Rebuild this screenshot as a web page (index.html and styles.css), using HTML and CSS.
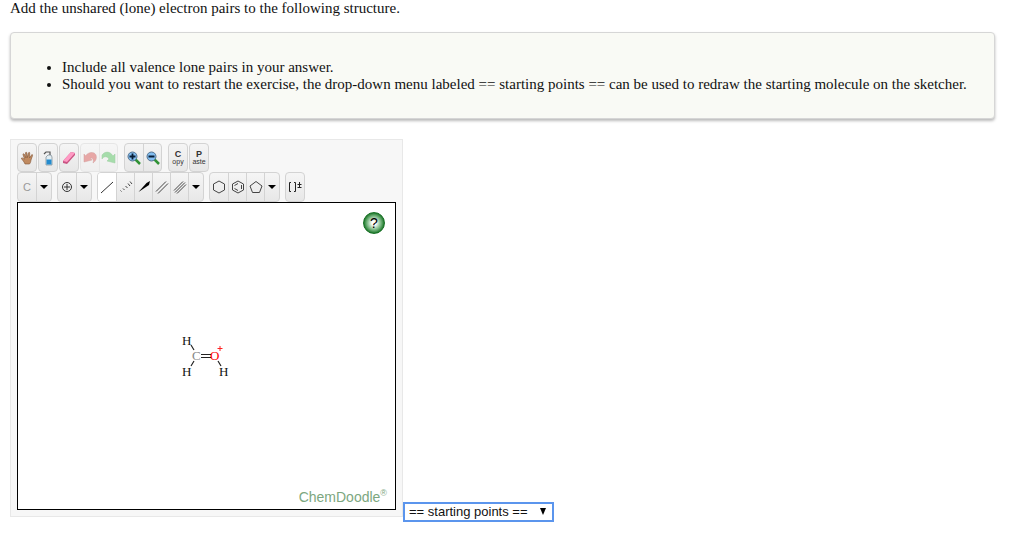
FILE: index.html
```html
<!DOCTYPE html>
<html lang="en">
<head>
<meta charset="utf-8">
<title>Lone pairs exercise</title>
<link rel="stylesheet" href="styles.css">
</head>
<body>
<main class="page">
  <p class="prompt">Add the unshared (lone) electron pairs to the following structure.</p>
  <section class="notes">
    <ul class="note-list">
      <li>Include all valence lone pairs in your answer.</li>
      <li>Should you want to restart the exercise, the drop-down menu labeled == starting points == can be used to redraw the starting molecule on the sketcher.</li>
    </ul>
  </section>
  <div class="work">
    <div class="sketcher">
      <div class="toolbar">
        <div class="group"><button class="tool" aria-label="Move"><svg width="16" height="16" viewBox="0 0 16 16"><path d="M6 14C5 11 2 9 2.500 8c1-.5 2 .7 3 1.200L4 4.500c0-1 1-1 1.500 0L7 8l-.5-5c0-1 1.200-1 1.400 0L8.500 7.500 9.500 3c.2-1 1.300-.8 1.200.2L10.500 8l2-3c.5-.8 1.400-.3 1 .7L12 10c-.2 2-.8 3-1.500 4z" fill="#c08a60" stroke="#805436" stroke-width=".6"/></svg></button></div>
        <div class="group"><button class="tool" aria-label="Clear"><svg width="16" height="16" viewBox="0 0 16 16"><path d="M4 4l2-2h4v3" fill="none" stroke="#555" stroke-width="1.200"/><path d="M6 7l2-2h3l1 2v8H6z" fill="#e2edf2" stroke="#788791" stroke-width=".7"/><path d="M6.500 9.500h5v5h-5z" fill="#238bce"/></svg></button></div>
        <div class="group"><button class="tool" aria-label="Erase"><svg width="16" height="16" viewBox="0 0 16 16"><path d="M2 11L10 2l4 1v2l-8 9-4-1z" fill="#c95483"/><path d="M2 11L10 2l4 1-8 9z" fill="#ff9ac4"/></svg></button></div>
        <div class="group group-faded">
          <button class="tool" aria-label="Undo"><svg width="16" height="16" viewBox="0 0 16 16"><path d="M2 4l1.500 2C6 2 12 1 14 5c1 3 0 6-3 8 1-3 0-5-3-5l2 2-8 2z" fill="#d44845" stroke="#a83432" stroke-width=".5"/></svg></button>
          <button class="tool" aria-label="Redo"><svg width="16" height="16" viewBox="0 0 16 16"><path d="M1 5C4 1 9 1 12 6l2-2v9l-8-2 2-2C6 6 3 6 1 9z" fill="#46bd51" stroke="#309d3a" stroke-width=".5"/></svg></button>
        </div>
        <div class="group group-zoom">
          <button class="tool" aria-label="Zoom in"><svg width="16" height="16" viewBox="0 0 16 16"><path d="M9 9l5 5" stroke="#309235" stroke-width="2.500"/><circle cx="6.500" cy="6.500" r="4.500" fill="#82bdf0" stroke="#54718d"/><path d="M3.500 6.500h6M6.500 3.500v6" stroke="#071d35" stroke-width="1.800"/></svg></button>
          <button class="tool" aria-label="Zoom out"><svg width="16" height="16" viewBox="0 0 16 16"><path d="M9 9l5 5" stroke="#309235" stroke-width="2.500"/><circle cx="6.500" cy="6.500" r="4.500" fill="#82bdf0" stroke="#54718d"/><path d="M3.500 6.500h6" stroke="#071d35" stroke-width="1.800"/></svg></button>
        </div>
        <div class="group group-copy"><button class="tool tool-text"><b>C</b><small>opy</small></button></div>
        <div class="group"><button class="tool tool-text"><b>P</b><small>aste</small></button></div>
      </div>
      <div class="toolbar toolbar-draw">
        <div class="group"><button class="tool tool-element">C</button><button class="tool tool-arrow" aria-label="More elements"><svg width="8" height="4" viewBox="0 0 8 4"><path d="M0 0h8L4 4z"/></svg></button></div>
        <div class="group"><button class="tool" aria-label="Increase charge"><svg width="16" height="16" viewBox="0 0 16 16"><g fill="none" stroke="#333"><circle cx="8" cy="8" r="4.500"/><path d="M5 8h6M8 5v6"/></g></svg></button><button class="tool tool-arrow" aria-label="More charges"><svg width="8" height="4" viewBox="0 0 8 4"><path d="M0 0h8L4 4z"/></svg></button></div>
        <div class="group">
          <button class="tool tool-selected" aria-label="Single bond"><svg width="16" height="16" viewBox="0 0 16 16"><path d="M2 14L14 3" stroke="#333"/></svg></button>
          <button class="tool" aria-label="Recessed bond"><svg width="16" height="16" viewBox="0 0 16 16"><path d="M2.500 11.500l1 1M5 9.500l1.500 1.500M7.500 7l2 2M10 4.500l2 2.500M12 2.500l2 2.500" stroke="#444"/></svg></button>
          <button class="tool" aria-label="Protruding bond"><svg width="16" height="16" viewBox="0 0 16 16"><path d="M2.500 13l8-9 3.500-2-1 4z"/></svg></button>
          <button class="tool" aria-label="Double bond"><svg width="16" height="16" viewBox="0 0 16 16"><path d="M2 12.500L12 2.500M4 14.500L14 4.500" stroke="#444"/></svg></button>
          <button class="tool tool-narrow" aria-label="Triple bond"><svg width="16" height="16" viewBox="0 0 16 16"><path d="M2 11.500l9-9M3 13.500L13 3.500M5 14.500l9-9" stroke="#444"/></svg></button>
          <button class="tool tool-arrow" aria-label="More bonds"><svg width="8" height="4" viewBox="0 0 8 4"><path d="M0 0h8L4 4z"/></svg></button>
        </div>
        <div class="group">
          <button class="tool" aria-label="Cyclohexane"><svg width="16" height="16" viewBox="0 0 16 16"><path d="M8 2l5.500 3v6L8 14l-5.500-3V5z" fill="none" stroke="#444"/></svg></button>
          <button class="tool" aria-label="Benzene"><svg width="16" height="16" viewBox="0 0 16 16"><path d="M8 2l5.500 3v6L8 14l-5.500-3V5zM8 4.500L4.500 6.500M4.500 9.500l3.500 2M11.500 6v4" fill="none" stroke="#444"/></svg></button>
          <button class="tool" aria-label="Cyclopentane"><svg width="16" height="16" viewBox="0 0 16 16"><path d="M8 2.500l6 4.500-2.500 6.500h-7L2 7z" fill="none" stroke="#444"/></svg></button>
          <button class="tool tool-arrow" aria-label="More rings"><svg width="8" height="4" viewBox="0 0 8 4"><path d="M0 0h8L4 4z"/></svg></button>
        </div>
        <div class="group"><button class="tool" aria-label="Brackets and charge"><svg width="16" height="16" viewBox="0 0 16 16"><path d="M4 3.500H2.500v9H4M7 3.500h1.500v9H7M10.500 5.500h4M12.500 3v5M10.500 8.500h4" fill="none" stroke="#222"/></svg></button></div>
      </div>
      <div class="canvas">
        <button class="help" aria-label="Help">?</button>
        <svg class="molecule" width="52" height="46" viewBox="0 0 52 46">
          <g stroke="#222" stroke-width="1.200"><path d="M10 12l3 5M13 28l-3 5M20 21.500h10M20 24.500h10M37 28l3 5" fill="none"/></g>
          <g class="atoms"><text x="1" y="12">H</text><text x="1" y="43">H</text><text x="38" y="43">H</text><text class="carbon" x="11" y="27">C</text><text class="oxygen" x="29" y="27">O</text></g>
          <path d="M36.500 15.500h5M39 13v5" stroke="#f22"/>
        </svg>
        <div class="brand">ChemDoodle<sup>®</sup></div>
      </div>
    </div>
    <div class="picker">
      <select class="starting" aria-label="Starting points"><option>== starting points ==</option></select>
      <svg class="picker-arrow" width="6" height="7" viewBox="0 0 6 7"><path d="M0 0h6L3 7z"/></svg>
    </div>
  </div>
</main>
</body>
</html>
```
FILE: styles.css
```css
* { box-sizing: border-box; }
body { margin: 0; background: #fff; color: #111; font: 15px/18px "Liberation Serif", serif; }
.page { padding: 0 29px 0 10px; }
.prompt { margin: 0 0 16px; line-height: 16px; }
.notes {
  padding: 26px 8px 25px;
  border: 1px solid #d6d6d6;
  border-radius: 4px;
  background: #f9faf5;
  box-shadow: 0 2px 3px #bbb;
}
.note-list { margin: 0; padding: 0 0 0 43px; line-height: 17px; }
.work { display: flex; align-items: flex-end; margin-top: 20px; }
.sketcher { margin-bottom: 5px; padding: 3px 6px 6px; border: 1px solid #e8e8e8; background: #f7f7f7; }
.toolbar { display: flex; gap: 1px; height: 29px; }
.toolbar-draw { gap: 5px; height: 30px; }
.group {
  display: flex;
  height: 29px;
  border: 1px solid #d3d3d3;
  border-radius: 4px;
  background: linear-gradient(#f5f5f5, #e7e7e7);
  overflow: hidden;
}
.toolbar-draw .group { height: 30px; }
.group-faded { opacity: 0.45; }
.group-zoom, .group-copy { margin-left: 5px; }
.tool {
  display: flex;
  align-items: center;
  justify-content: center;
  width: 18px;
  padding: 0;
  border: 0;
  background: transparent;
  color: #333;
  font: 11px/12px "Liberation Sans", sans-serif;
}
.tool svg { flex: none; }
.tool + .tool { border-left: 1px solid #d3d3d3; }
.tool-arrow { width: 15px; }
.tool-selected { background: #fff; }
.tool-element { color: #999; }
.tool-text { flex-direction: column; }
.tool-text b { font-size: 9px; line-height: 8px; }
.tool-text small { font-size: 7px; line-height: 7px; }
.canvas {
  display: flex;
  flex-direction: column;
  align-items: center;
  justify-content: space-between;
  width: 379px;
  height: 308px;
  padding: 9px 8px 3px;
  border: 1px solid #000;
  background: #fff;
}
.help {
  align-self: flex-end;
  width: 22px;
  height: 22px;
  margin-right: 2px;
  padding: 0;
  border: 1px solid #167024;
  border-radius: 50%;
  background: radial-gradient(circle, #fff 15%, #74b47d 50%, #12701f 75%);
  color: #000;
  font: 14px/18px "Liberation Sans", sans-serif;
}
.molecule { display: block; margin-bottom: 10px; }
.atoms { font: 13px "Liberation Serif", serif; fill: #111; }
.carbon { fill: #888; }
.oxygen { fill: #f00; }
.brand { align-self: flex-end; color: #7ca780; font: 14px/18px "Liberation Sans", sans-serif; }
.brand sup { font-size: 9px; line-height: 0; }
.picker { position: relative; }
.starting {
  display: block;
  width: 151px;
  height: 20px;
  padding: 0 4px;
  border: 2px solid #5b95ed;
  border-radius: 0;
  appearance: none;
  background: #fff;
  color: #111;
  font: 13px/16px "Liberation Sans", sans-serif;
}
.picker-arrow { position: absolute; top: 6px; right: 8px; pointer-events: none; }
```
